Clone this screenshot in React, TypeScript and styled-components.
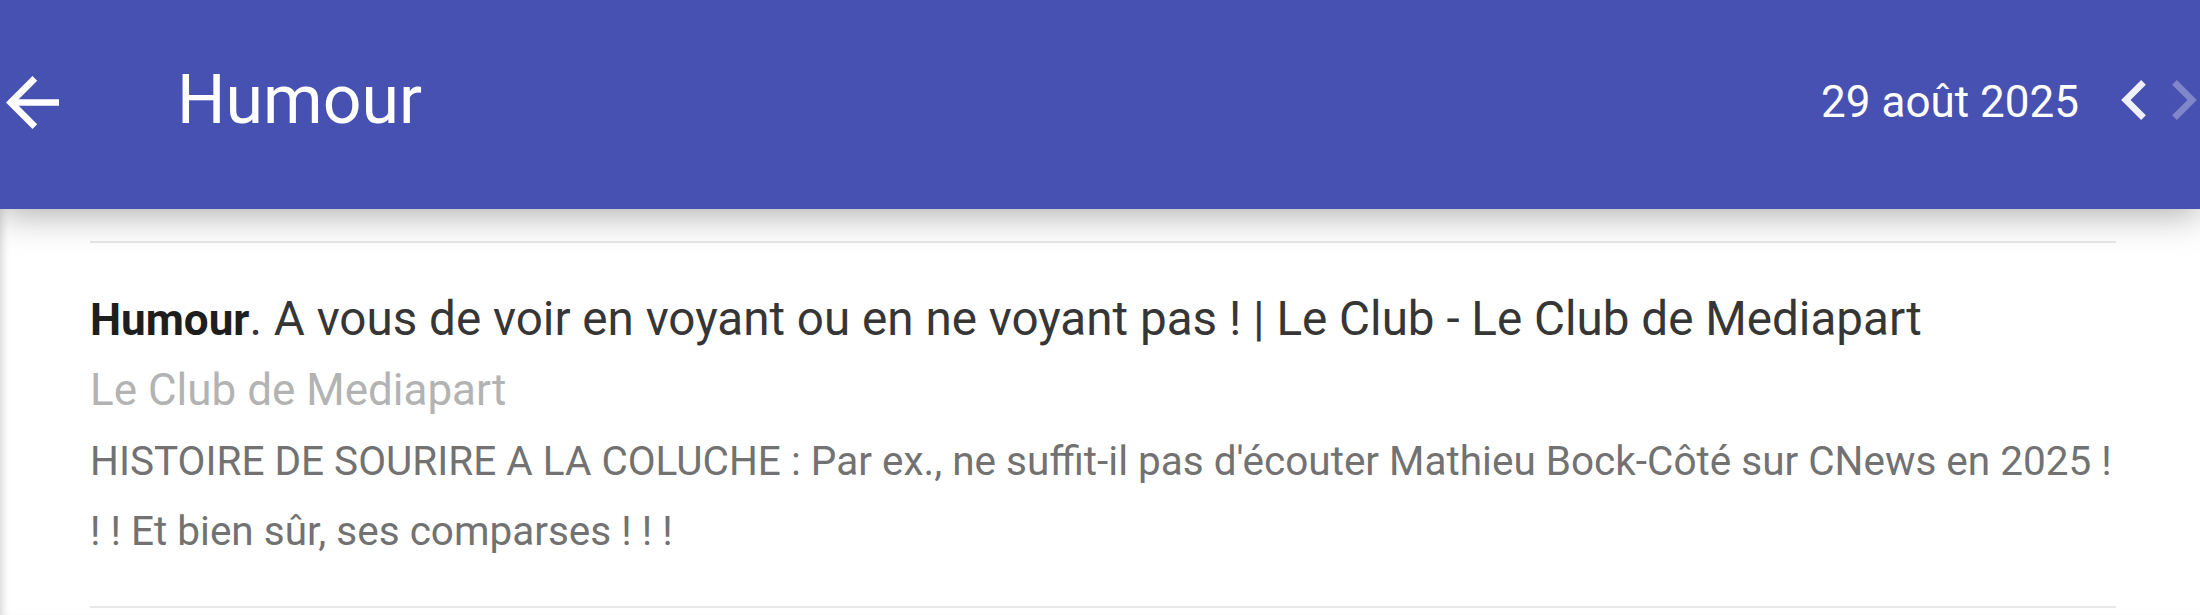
import React from 'react';
import styled, {createGlobalStyle} from 'styled-components';

const GlobalStyle = createGlobalStyle`
    body {
        margin: 0;
        background: #ffffff;
        font-family: Roboto, "Noto Sans", "Liberation Sans", sans-serif;
    }
`

type Article = {
    id: number
    tag: string
    title: string
    source: string
    lines: string[]
}

const articles: Article[] = [
    {
        id: 1,
        tag: 'Humour',
        title: '. A vous de voir en voyant ou en ne voyant pas ! | Le Club - Le Club de Mediapart',
        source: 'Le Club de Mediapart',
        lines: [
            'HISTOIRE DE SOURIRE A LA COLUCHE : Par ex., ne suffit-il pas d\'écouter Mathieu Bock-Côté sur CNews en 2025 !',
            '! ! Et bien sûr, ses comparses ! ! !',
        ],
    },
]

const BackIcon = () => (
    <svg width={53} height={53} viewBox="4 4 16 16" fill="currentColor">
        <path d="M20 11H7.83l5.59-5.59L12 4l-8 8 8 8 1.41-1.41L7.83 13H20v-2z"/>
    </svg>
)

const ChevronLeft = () => (
    <svg width={25} height={40} viewBox="8 6 7.41 12" fill="currentColor">
        <path d="M15.41 7.41L14 6l-6 6 6 6 1.41-1.41L10.83 12z"/>
    </svg>
)

const ChevronRight = () => (
    <svg width={25} height={40} viewBox="8.59 6 7.41 12" fill="currentColor">
        <path d="M10 6L8.59 7.41 13.17 12l-4.58 4.59L10 18l6-6z"/>
    </svg>
)

export default function App() {
    return (
        <>
            <GlobalStyle/>
            <Page>
                <TopBar>
                    <BackButton><BackIcon/></BackButton>
                    <BarTitle>Humour</BarTitle>
                    <DateLabel>29 août 2025</DateLabel>
                    <NavButton $disabled={false}><ChevronLeft/></NavButton>
                    <NavButton $disabled={true}><ChevronRight/></NavButton>
                </TopBar>
                <Feed>
                    {articles.map(a =>
                        <Entry key={a.id}>
                            <EntryTitle><strong>{a.tag}</strong>{a.title}</EntryTitle>
                            <EntrySource>{a.source}</EntrySource>
                            <EntrySummary>
                                {a.lines.map((l, i) => <React.Fragment key={i}>{i > 0 && <br/>}{l}</React.Fragment>)}
                            </EntrySummary>
                        </Entry>
                    )}
                </Feed>
            </Page>
        </>
    );
}

const Page = styled.div`
    width: 2200px;
    height: 615px;
    overflow: hidden;
    display: flex;
    flex-direction: column;
`

const TopBar = styled.header`
    position: relative;
    z-index: 1;
    flex: 0 0 auto;
    height: 209px;
    box-sizing: border-box;
    padding-bottom: 10px;
    display: flex;
    align-items: center;
    background: #4751b2;
    color: #ffffff;
    box-shadow: 0 4px 36px rgba(0, 0, 0, 0.35);
`

const BackButton = styled.div`
    display: flex;
    margin: 6px 0 0 6px;
`

const BarTitle = styled.h1`
    flex: 1;
    margin: 0 0 0 118px;
    font-size: 68px;
    font-weight: 400;
`

const DateLabel = styled.div`
    margin: 5px 42px 0 0;
    font-size: 44px;
`

const NavButton = styled.div<{ $disabled: boolean }>`
    display: flex;
    margin-right: 26px;
    opacity: ${p => p.$disabled ? 0.3 : 0.92};

    &:last-child {
        margin-right: 3px;
    }
`

const Feed = styled.main`
    flex: 1;
    padding: 32px 84px 0 90px;
    box-shadow: inset 8px 0 8px -6px rgba(0, 0, 0, 0.18);
`

const Entry = styled.article`
    border-top: 2px solid #e8e8e8;
    border-bottom: 2px solid #e8e8e8;
    padding: 42px 0 40px;
`

const EntryTitle = styled.div`
    font-size: 47.6px;
    line-height: 69px;
    color: #363636;

    strong {
        font-size: 44px;
        color: #1e1e1e;
        font-weight: 700;
    }
`

const EntrySource = styled.div`
    margin-top: 3px;
    font-size: 44px;
    line-height: 65px;
    color: #b3b3b3;
`

const EntrySummary = styled.div`
    margin-top: 3px;
    font-size: 40.5px;
    line-height: 70px;
    color: #727272;
    white-space: nowrap;
`
